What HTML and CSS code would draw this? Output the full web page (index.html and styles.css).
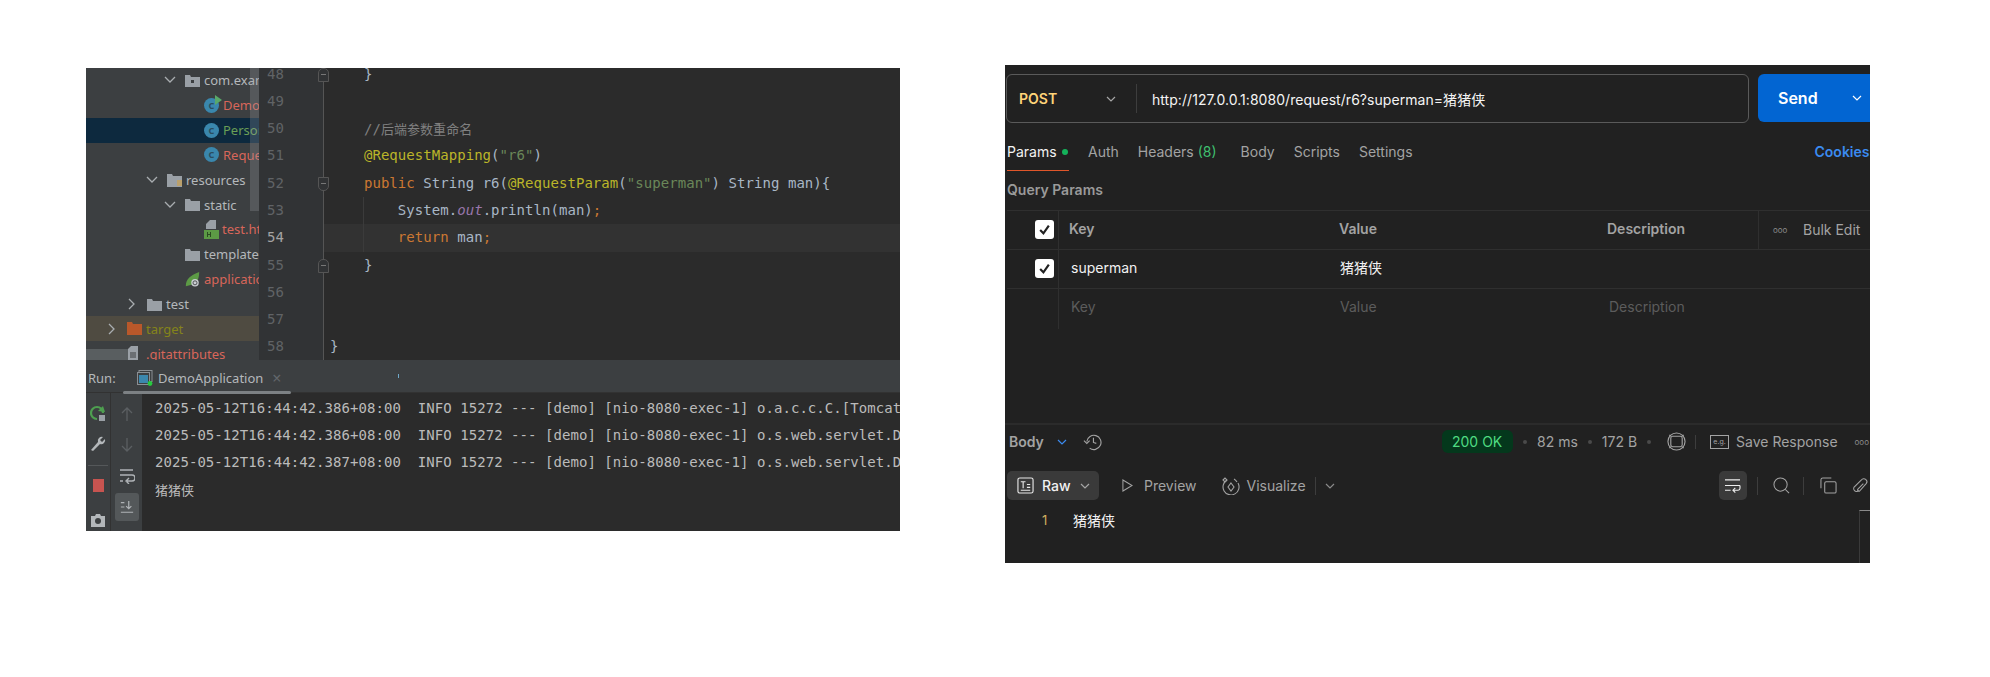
FILE: index.html
```html
<!DOCTYPE html>
<html lang="en">
<head>
    <meta charset="UTF-8">
    <link rel="stylesheet" href="styles.css">
    <title>request param rename</title>
</head>
<body>
<div class="page">

    <!-- IDE screenshot -->
    <div class="ide">
        <div class="ide-top">
            <div class="tree">
                <div class="row lvl4"><svg class="chev" viewBox="0 0 16 16"><path d="M3 5l5 5 5-5"/></svg><svg class="ico" viewBox="0 0 15 15"><path class="fold-fill" d="M0 2h5l1 2h9v10H0z"/><rect x="6" y="7" width="3" height="3" fill="#3c3f41"/></svg><span>com.example.demo</span></div>
                <div class="row lvl5"><span class="cls">C<i class="run-mark"></i></span><span class="red">DemoApplication</span></div>
                <div class="row lvl5 selected"><span class="cls">C</span><span class="green">Person</span></div>
                <div class="row lvl5"><span class="cls">C</span><span class="red">RequestController</span></div>
                <div class="row lvl3"><svg class="chev" viewBox="0 0 16 16"><path d="M3 5l5 5 5-5"/></svg><svg class="ico" viewBox="0 0 15 15"><path class="fold-fill" d="M0 2h5l1 2h9v11H0z"/><path d="M10 9h5M10 11h5M10 13h5" stroke="#d9a032" stroke-width="1.2"/></svg><span>resources</span></div>
                <div class="row lvl4"><svg class="chev" viewBox="0 0 16 16"><path d="M3 5l5 5 5-5"/></svg><svg class="ico" viewBox="0 0 15 15"><path class="fold-fill" d="M0 2h5l1 2h9v10H0z"/></svg><span>static</span></div>
                <div class="row lvl5"><svg class="ico-file" viewBox="0 0 15 19"><path d="M6 0h6v9H2V4z" fill="#9aa0a6"/><rect x="0" y="10" width="15" height="9" fill="#5c9a45"/><path d="M3.5 12v5M6.5 12v5M3.5 14.5h3" stroke="#2c4a22" stroke-width="1"/></svg><span class="red">test.html</span></div>
                <div class="row lvl4"><span class="no-chev"></span><svg class="ico" viewBox="0 0 15 15"><path class="fold-fill" d="M0 2h5l1 2h9v10H0z"/></svg><span>templates</span></div>
                <div class="row lvl4"><span class="no-chev"></span><svg class="ico" viewBox="0 0 16 18"><path d="M0 17C0 8 6 4 16 0c0 9-3 14-8 15z" fill="#5c9a45"/><circle cx="11" cy="13" r="4.5" fill="#c9cdd1"/><circle cx="11" cy="13" r="2.4" fill="none" stroke="#3c3f41"/></svg><span class="red">application.properties</span></div>
                <div class="row lvl2"><svg class="chev" viewBox="0 0 16 16"><path d="M5 3l5 5-5 5"/></svg><svg class="ico" viewBox="0 0 15 15"><path class="fold-fill" d="M0 2h5l1 2h9v10H0z"/></svg><span>test</span></div>
                <div class="row lvl1 ignored"><svg class="chev" viewBox="0 0 16 16"><path d="M5 3l5 5-5 5"/></svg><svg class="ico" viewBox="0 0 15 15"><path d="M0 1h5l1 2h9v11H0z" fill="#b9582a"/></svg><span class="olive">target</span></div>
                <div class="row lvl1"><span class="no-chev"></span><svg class="ico" viewBox="0 0 15 15"><path d="M4 0h7v14H1V3z" fill="#9aa0a6"/><path d="M3 7h6M3 9h6M3 11h6" stroke="#3c3f41"/></svg><span class="red">.gitattributes</span></div>
                <div class="tree-vbar"></div>
                <div class="tree-hbar"></div>
            </div>
            <div class="editor">
                <div class="code">
                    <div class="line"><div class="num">48<i class="fold-mark up"></i></div><div class="src">    <b class="plain">}</b></div></div>
                    <div class="line"><div class="num">49</div><div class="src"></div></div>
                    <div class="line"><div class="num">50</div><div class="src">    <span class="comment">//<span class="cjk">后端参数重命名</span></span></div></div>
                    <div class="line"><div class="num">51</div><div class="src">    <span class="anno">@RequestMapping</span>(<span class="str">"r6"</span>)</div></div>
                    <div class="line"><div class="num">52<i class="fold-mark down"></i></div><div class="src">    <span class="kw">public</span> String r6(<span class="anno">@RequestParam</span>(<span class="str">"superman"</span>) String man){</div></div>
                    <div class="line guide"><div class="num">53</div><div class="src">        System.<span class="static">out</span>.println(man)<span class="kw">;</span></div></div>
                    <div class="line guide current"><div class="num">54</div><div class="src">        <span class="kw">return</span> man<span class="kw">;</span></div></div>
                    <div class="line"><div class="num">55<i class="fold-mark up"></i></div><div class="src">    }</div></div>
                    <div class="line"><div class="num">56</div><div class="src"></div></div>
                    <div class="line"><div class="num">57</div><div class="src"></div></div>
                    <div class="line"><div class="num">58</div><div class="src">}</div></div>
                </div>
            </div>
        </div>

        <div class="runbar">
            <span class="run-label">Run:</span>
            <span class="run-tab">
                <svg class="app-ico" viewBox="0 0 16 16"><rect x="2" y="0.5" width="13" height="11" fill="none" stroke="#8a8f94"/><rect x="0.5" y="2.5" width="12" height="12" fill="#3c3f41" stroke="#8a8f94"/><rect x="2" y="5" width="9" height="8" fill="#3b87ad"/><circle cx="13" cy="13.5" r="2.4" fill="#27c93f"/></svg>
                DemoApplication <em>×</em>
            </span>
            <i class="run-underline"></i>
            <i class="run-tick"></i>
        </div>

        <div class="console">
            <div class="tools">
                <svg class="t-ico" viewBox="0 0 16 16"><path d="M13 8a6 6 0 1 0-6 6" fill="none" stroke="#4e9f50" stroke-width="2.2"/><path d="M8 6l5-5 2 6z" fill="#4e9f50"/><rect x="9" y="10" width="6" height="6" fill="#9aa0a6"/></svg>
                <svg class="t-ico" viewBox="0 0 16 16"><path d="M1 15l7-8a4 4 0 0 1 5-5l-3 3 2 2 3-3a4 4 0 0 1-5 5l-7 7z" fill="#b3b7ba"/></svg>
                <i class="tool-sep"></i>
                <span class="stop"></span>
                <svg class="t-ico cam" viewBox="0 0 16 16"><path d="M1 4h4l1-2h4l1 2h4v11H1z" fill="#b3b7ba"/><circle cx="8" cy="9" r="3" fill="#3c3f41"/></svg>
            </div>
            <div class="tools second">
                <svg class="t2" viewBox="0 0 16 16"><path d="M8 15V2M3 7l5-5 5 5" class="dim"/></svg>
                <svg class="t2" viewBox="0 0 16 16"><path d="M8 1v13M3 9l5 5 5-5" class="dim"/></svg>
                <svg class="t2" viewBox="0 0 16 16"><path d="M1 2h13M1 7h12a2.500 2.500 0 0 1 0 6H8M10 10l-3 3 3 3M1 13h3" class="lit"/></svg>
                <span class="scroll-end"><svg viewBox="0 0 16 16"><path d="M1 3h4M1 8h4M1 14h14M10 1v9M7 7l3 3 3-3" class="lit"/></svg></span>
            </div>
            <div class="log">
                <div>2025-05-12T16:44:42.386+08:00  INFO 15272 --- [demo] [nio-8080-exec-1] o.a.c.c.C.[Tomcat].[localhost].[/]</div>
                <div>2025-05-12T16:44:42.386+08:00  INFO 15272 --- [demo] [nio-8080-exec-1] o.s.web.servlet.DispatcherServlet</div>
                <div>2025-05-12T16:44:42.387+08:00  INFO 15272 --- [demo] [nio-8080-exec-1] o.s.web.servlet.DispatcherServlet</div>
                <div class="cjk">猪猪侠</div>
            </div>
        </div>
    </div>

    <!-- Postman screenshot -->
    <div class="pm">
        <div class="url-row">
            <div class="url-box">
                <span class="method">POST</span>
                <svg class="ch ch-method" viewBox="0 0 10 10"><path d="M1 3l4 4 4-4"/></svg>
                <i class="url-sep"></i>
                <span class="url">http://127.0.0.1:8080/request/r6?superman=猪猪侠</span>
            </div>
            <div class="send">
                <span>Send</span>
                <svg class="ch ch-send" viewBox="0 0 10 10"><path d="M1 3l4 4 4-4"/></svg>
            </div>
        </div>

        <div class="tabs">
            <span class="tab active">Params<i class="dot"></i></span>
            <span class="tab">Auth</span>
            <span class="tab">Headers <b>(8)</b></span>
            <span class="tab wide">Body</span>
            <span class="tab">Scripts</span>
            <span class="tab">Settings</span>
            <span class="cookies">Cookies</span>
        </div>

        <div class="query-title">Query Params</div>

        <div class="params">
            <div class="p-row head">
                <div class="c-check"><span class="box"><svg viewBox="0 0 12 12"><path d="M2 6.500l3 3 5-7"/></svg></span></div>
                <div class="c-key">Key</div>
                <div class="c-val">Value</div>
                <div class="c-desc">Description</div>
                <div class="c-bulk"><span class="ooo">ooo</span>Bulk Edit</div>
            </div>
            <div class="p-row">
                <div class="c-check"><span class="box"><svg viewBox="0 0 12 12"><path d="M2 6.500l3 3 5-7"/></svg></span></div>
                <div class="c-key">superman</div>
                <div class="c-val">猪猪侠</div>
                <div class="c-desc"></div>
                <div></div>
            </div>
            <div class="p-row ghost">
                <div class="c-check"></div>
                <div class="c-key">Key</div>
                <div class="c-val">Value</div>
                <div class="c-desc">Description</div>
                <div></div>
            </div>
        </div>

        <div class="res-line"></div>

        <div class="res-bar">
            <div class="res-left">
                <span class="res-body">Body</span>
                <svg class="ch ch-blue" viewBox="0 0 10 10"><path d="M1 3l4 4 4-4"/></svg>
                <svg class="i-hist" viewBox="0 0 20 20"><path d="M4 10a7.500 7.500 0 1 1 3 7M1 9l3 3 3-3M11 6v5l3 1"/></svg>
            </div>
            <span class="status">200 OK</span>
            <i class="sep-dot"></i><span class="meta">82 ms</span>
            <i class="sep-dot"></i><span class="meta">172 B</span>
            <i class="sep-dot"></i>
            <svg class="i-globe" viewBox="0 0 20 20"><circle cx="10" cy="10" r="9"/><rect x="4" y="4.500" width="12" height="11" rx="2"/><path d="M4 4.500l-1.500-1.500M16 4.500l1.500-1.500M4 15.500l-1.500 1.500M16 15.500l1.500 1.500"/></svg>
            <i class="bar-sep"></i>
            <span class="eg">e.g.</span>
            <span class="meta save">Save Response</span>
            <span class="ooo res-ooo">ooo</span>
        </div>

        <div class="view-bar">
            <div class="raw">
                <svg class="i-raw" viewBox="0 0 18 18"><rect x="1" y="1" width="16" height="16" rx="2"/><path d="M4 5h5M6.500 5v7M10.500 8h3.500M10.500 11h3.500M4 14h10"/></svg>
                <span>Raw</span>
                <svg class="ch ch-raw" viewBox="0 0 10 10"><path d="M1 3l4 4 4-4"/></svg>
            </div>
            <svg class="i-play" viewBox="0 0 12 14"><path d="M1 1l10 6-10 6z"/></svg>
            <span class="view-item preview">Preview</span>
            <svg class="i-vis" viewBox="0 0 18 18"><path d="M5 3a8 8 0 1 0 11 3M12 2a8 8 0 0 1 3 3M9 6l3 4-3 4-3-4z"/><path d="M1 3l2-2 2 2-2 2z"/></svg>
            <span class="view-item visualize">Visualize</span>
            <i class="bar-sep tall vis-sep"></i>
            <svg class="ch ch-vis" viewBox="0 0 10 10"><path d="M1 3l4 4 4-4"/></svg>
            <span class="wrap-btn"><svg viewBox="0 0 18 16"><path d="M1 2h16M1 8h16M1 13h6M17 8v3a2 2 0 0 1-2 2h-5M12 10.500l-2.500 2.500 2.500 2.500"/></svg></span>
            <i class="bar-sep tall"></i>
            <svg class="i-search" viewBox="0 0 18 18"><circle cx="8" cy="8" r="7"/><path d="M13 13l4 4"/></svg>
            <i class="bar-sep tall"></i>
            <svg class="i-copy" viewBox="0 0 18 18"><rect x="5" y="5" width="12" height="12" rx="1.500"/><path d="M1 12V3a2 2 0 0 1 2-2h9"/></svg>
            <svg class="i-link" viewBox="0 0 18 18"><path d="M7 14l-1 1a3 3 0 0 1-4-4l8-8a3 3 0 0 1 5 4l-7 8a1.500 1.500 0 0 1-2-2l6-6"/></svg>
        </div>

        <div class="out-row">
            <span class="ln">1</span>
            <span class="out-text">猪猪侠</span>
        </div>
        <div class="mini-map"></div>
    </div>
</div>
</body>
</html>
```

FILE: styles.css
```css
* {
    margin: 0;
    padding: 0;
    box-sizing: border-box;
}
body {
    background: #fff;
    font-family: "Inter", "Noto Sans CJK SC", sans-serif;
    height: 677px;
    overflow: hidden;
}
i, em {
    font-style: normal;
}
.page {
    display: flex;
    align-items: flex-start;
    padding-left: 86px;
}

/* ---- IDE ---- */
.ide {
    width: 814px;
    height: 463px;
    margin-top: 68px;
    background: #2b2b2b;
    overflow: hidden;
    flex: none;
    font-family: "DejaVu Sans Mono", "Noto Sans CJK SC", monospace;
}
.ide-top {
    display: flex;
    height: 292px;
}
.tree {
    position: relative;
    width: 173px;
    height: 292px;
    background: #3c3f41;
    overflow: hidden;
    flex: none;
    font-family: "Noto Sans", "Noto Sans CJK SC", sans-serif;
    font-size: 13px;
    color: #b4b8bb;
}
.row {
    display: flex;
    align-items: center;
    height: 24.850px;
    white-space: nowrap;
}
.lvl1 { padding-left: 18px; }
.lvl2 { padding-left: 38px; }
.lvl3 { padding-left: 58px; }
.lvl4 { padding-left: 76px; }
.lvl5 { padding-left: 118px; }
.selected { background: #0d293e; }
.ignored { background: #4f4b41; }
.chev {
    width: 16px;
    height: 16px;
    margin-right: 7px;
    flex: none;
}
.chev path {
    fill: none;
    stroke: #a9adb0;
    stroke-width: 1.300;
}
.no-chev {
    width: 23px;
    flex: none;
}
.ico {
    width: 15px;
    height: 15px;
    margin-right: 4px;
    flex: none;
}
.ico-file {
    width: 15px;
    height: 19px;
    margin-right: 3px;
    flex: none;
}
.fold-fill { fill: #9aa0a6; }
.cls {
    position: relative;
    width: 15px;
    height: 15px;
    margin-right: 4px;
    border-radius: 50%;
    background: #3a87ad;
    color: #2a4d60;
    font-size: 9px;
    font-weight: 700;
    line-height: 15px;
    text-align: center;
    flex: none;
}
.run-mark {
    position: absolute;
    top: -3px;
    right: -3px;
    border-left: 7px solid #59a869;
    border-top: 5px solid transparent;
    border-bottom: 5px solid transparent;
}
.red { color: #d8665a; }
.green { color: #6a9f56; }
.olive { color: #85841a; }
.tree-vbar {
    position: absolute;
    left: 164px;
    top: 0;
    width: 9px;
    height: 143px;
    background: rgba(160, 165, 170, 0.25);
}
.tree-hbar {
    position: absolute;
    left: 0;
    top: 281px;
    width: 44px;
    height: 11px;
    background: rgba(160, 165, 170, 0.3);
}

.editor {
    flex: 1;
    overflow: hidden;
    background: #2b2b2b;
}
.code {
    margin-top: -7.500px;
    font-size: 14px;
    letter-spacing: 0.050px;
    color: #a9b7c6;
}
.line {
    position: relative;
    display: flex;
    height: 27.300px;
    line-height: 27.300px;
}
.num {
    position: relative;
    width: 65px;
    padding-left: 8px;
    background: #313335;
    border-right: 1px solid #555;
    color: #606366;
    flex: none;
}
.src {
    flex: 1;
    padding-left: 6px;
    white-space: pre;
}
.src b { font-weight: 400; }
.current .src { background: #323232; }
.current .num { color: #a4a3a3; }
.guide::before {
    content: "";
    position: absolute;
    left: 104px;
    top: 0;
    bottom: 0;
    width: 1px;
    background: #3b3b3b;
}
.comment { color: #808080; }
.anno { color: #bbb529; }
.kw { color: #cc7832; }
.str { color: #6a8759; }
.static { color: #9876aa; font-style: italic; }
.cjk { font-family: "Noto Sans CJK SC", sans-serif; font-size: 13px; }
.fold-mark {
    position: absolute;
    right: -6px;
    top: 7px;
    width: 11px;
    height: 14px;
    background: #313335;
    border: 1px solid #555;
}
.fold-mark::after {
    content: "";
    position: absolute;
    left: 2px;
    top: 5px;
    width: 5px;
    height: 1px;
    background: #777;
}
.fold-mark.up { border-radius: 5px 5px 0 0; }
.fold-mark.down { border-radius: 0 0 5px 5px; }

.runbar {
    position: relative;
    display: flex;
    align-items: center;
    height: 33px;
    padding-top: 3px;
    background: #3c3f41;
    border-bottom: 1px solid #323232;
    font-family: "Noto Sans", sans-serif;
    font-size: 13px;
    color: #b4b8bb;
}
.run-label { margin-left: 2px; width: 49px; }
.run-tab {
    display: flex;
    align-items: center;
    gap: 5px;
}
.run-tab em { color: #62666a; margin-left: 4px; font-size: 16px; }
.app-ico { width: 16px; height: 16px; }
.run-underline {
    position: absolute;
    left: 37px;
    bottom: -2px;
    width: 168px;
    height: 3px;
    border-radius: 2px;
    background: #7d8184;
}
.run-tick {
    position: absolute;
    left: 312px;
    top: 14px;
    width: 1px;
    height: 4px;
    background: #6fa8c9;
}

.console {
    display: flex;
    height: 138px;
}
.tools {
    display: flex;
    flex-direction: column;
    align-items: center;
    width: 25px;
    padding-top: 12px;
    background: #3c3f41;
    border-right: 1px solid #323232;
    flex: none;
}
.tools.second {
    width: 31px;
    padding-top: 13px;
    gap: 15px;
    border-right: 0;
}
.t-ico { width: 16px; height: 16px; margin-bottom: 14px; flex: none; }
.tool-sep { width: 20px; height: 1px; background: #55585a; margin-bottom: 13px; }
.stop { width: 11px; height: 13px; background: #c75450; margin-bottom: 20px; flex: none; }
.cam { margin-bottom: 0; }
.t2 { width: 16px; height: 16px; fill: none; flex: none; }
.dim { stroke: #5b5f62; stroke-width: 1.300; fill: none; }
.lit { stroke: #afb3b6; stroke-width: 1.400; fill: none; }
.scroll-end {
    display: flex;
    align-items: center;
    justify-content: center;
    width: 24px;
    height: 28px;
    margin-top: -6px;
    border-radius: 3px;
    background: #54585a;
    flex: none;
}
.scroll-end svg { width: 14px; height: 14px; }
.log {
    flex: 1;
    padding: 2px 0 0 13px;
    background: #2b2b2b;
    font-size: 14px;
    letter-spacing: 0.050px;
    line-height: 27px;
    color: #bbb;
    overflow: hidden;
}
.log div { white-space: pre; }

/* ---- Postman ---- */
.pm {
    position: relative;
    width: 865px;
    height: 498px;
    margin: 65px 0 0 105px;
    background: #212121;
    overflow: hidden;
    flex: none;
    color: #fff;
    font-size: 14px;
}
.ch {
    fill: none;
    stroke: #a6a6a6;
    stroke-width: 1.200;
    flex: none;
}
.url-row {
    display: flex;
    width: 900px;
    padding: 9px 0 0 1px;
}
.url-box {
    display: flex;
    align-items: center;
    width: 743px;
    height: 49px;
    padding-left: 12px;
    border: 1px solid #5a5a5a;
    border-radius: 6px;
    flex: none;
}
.method {
    width: 80px;
    font-weight: 600;
    color: #ffd479;
}
.ch-method { width: 10px; height: 10px; margin-left: 7px; }
.url-sep {
    width: 1px;
    height: 29px;
    margin: 0 15px 0 20px;
    background: #3d3d3d;
}
.url { color: #f4f4f4; white-space: nowrap; letter-spacing: 0.050px; }
.send {
    display: flex;
    align-items: center;
    width: 150px;
    height: 48px;
    margin-left: 9px;
    padding-left: 20px;
    border-radius: 6px;
    background: #0265d2;
    font-size: 16px;
    font-weight: 600;
    flex: none;
}
.ch-send { width: 10px; height: 10px; margin-left: 34px; stroke: #fff; }

.tabs {
    display: flex;
    gap: 19px;
    width: 900px;
    height: 38px;
    margin: 10px 0 0 2px;
    color: #a3a3a3;
}
.tab {
    display: flex;
    align-items: center;
    height: 38px;
    border-bottom: 1px solid transparent;
    white-space: pre;
}
.tab b { font-weight: 400; color: #3fbf6f; }
.tab.active {
    width: 62px;
    border-bottom-color: #e0562a;
    color: #f2f2f2;
}
.tab.wide { margin-left: 5px; }
.dot {
    width: 6px;
    height: 6px;
    margin-left: 5px;
    border-radius: 50%;
    background: #14b25a;
}
.cookies {
    align-self: center;
    margin: -1px 0 0 383px;
    font-weight: 600;
    color: #3b8bf0;
}
.query-title {
    height: 39px;
    margin-left: 2px;
    font-weight: 600;
    line-height: 38px;
    color: #9a9a9a;
}
.params {
    margin-left: 2px;
    border-top: 1px solid #2f2f2f;
}
.p-row {
    display: grid;
    grid-template-columns: 52px 280px 268px 151px 112px;
    align-items: stretch;
    height: 39px;
    line-height: 36px;
    border-bottom: 1px solid #2f2f2f;
    color: #f2f2f2;
}
.p-row.head { color: #a3a3a3; font-weight: 600; }
.p-row.ghost { border-bottom: 0; color: #5c5c5c; height: 40px; }
.c-check {
    display: flex;
    align-items: center;
    justify-content: flex-end;
    padding-right: 4px;
    border-right: 1px solid #2f2f2f;
}
.box {
    display: flex;
    align-items: center;
    justify-content: center;
    width: 19px;
    height: 19px;
    margin-top: -1px;
    border-radius: 3px;
    background: #fff;
}
.box svg {
    width: 13px;
    height: 13px;
    fill: none;
    stroke: #212121;
    stroke-width: 2;
}
.c-key { padding-left: 12px; }
.head .c-key { padding-left: 10px; }
.c-val { padding-left: 1px; }
.head .c-val { padding-left: 0; }
.c-desc { padding-left: 2px; }
.head .c-desc { padding-left: 0; }
.c-bulk {
    display: flex;
    align-items: center;
    border-left: 1px solid #2f2f2f;
    padding-left: 14px;
    font-weight: 400;
    white-space: nowrap;
}
.ooo {
    width: 30px;
    font-size: 8px;
    color: #8a8a8a;
}
.res-line {
    height: 2px;
    margin-top: 94px;
    background: #2b2b2b;
}
.res-bar {
    display: flex;
    align-items: center;
    height: 33px;
    color: #a3a3a3;
    white-space: nowrap;
}
.res-left {
    display: flex;
    align-items: center;
    width: 437px;
    padding-left: 4px;
    flex: none;
}
.res-body { width: 48px; font-weight: 600; }
.ch-blue { width: 10px; height: 10px; stroke: #3b8bf0; }
.i-hist {
    width: 19px;
    height: 19px;
    margin-left: 16px;
    fill: none;
    stroke: #a3a3a3;
    stroke-width: 1.200;
}
.status {
    width: 71px;
    height: 23px;
    padding-left: 10px;
    border-radius: 6px;
    background: #04381c;
    color: #4fdc82;
    line-height: 23px;
    flex: none;
}
.sep-dot {
    width: 4px;
    height: 4px;
    margin: 0 10px;
    border-radius: 50%;
    background: #4a4a4a;
    flex: none;
}
.meta { color: #a3a3a3; }
.i-globe {
    width: 19px;
    height: 19px;
    margin-left: 6px;
    fill: none;
    stroke: #a3a3a3;
    stroke-width: 1.200;
    flex: none;
}
.bar-sep {
    width: 1px;
    height: 14px;
    margin: 0 14px 0 9px;
    background: #3d3d3d;
    flex: none;
}
.eg {
    width: 19px;
    height: 14px;
    margin-right: 7px;
    border: 1px solid #a3a3a3;
    font-size: 7px;
    line-height: 11px;
    text-align: center;
    color: #a3a3a3;
    flex: none;
}
.res-ooo { margin-left: 17px; }

.view-bar {
    display: flex;
    align-items: center;
    height: 29px;
    margin-top: 13px;
    white-space: nowrap;
    color: #a3a3a3;
}
.raw {
    display: flex;
    align-items: center;
    width: 92px;
    height: 29px;
    margin-left: 2px;
    padding-left: 10px;
    border-radius: 5px;
    background: #3a3a3a;
    color: #f2f2f2;
    font-weight: 500;
    flex: none;
}
.i-raw {
    width: 17px;
    height: 17px;
    margin-right: 8px;
    fill: none;
    stroke: #e8e8e8;
    stroke-width: 1.200;
}
.ch-raw { width: 10px; height: 10px; margin-left: 9px; }
.i-play {
    width: 11px;
    height: 13px;
    margin: 0 11px 0 23px;
    fill: none;
    stroke: #a3a3a3;
    stroke-width: 1.100;
    flex: none;
}
.i-vis {
    width: 18px;
    height: 18px;
    margin: 0 7px 0 25px;
    fill: none;
    stroke: #a3a3a3;
    stroke-width: 1.100;
    flex: none;
}
.bar-sep.tall { height: 18px; }
.bar-sep.vis-sep { margin-right: 9px; }
.ch-vis { width: 10px; height: 10px; stroke: #8a8a8a; }
.wrap-btn {
    display: flex;
    align-items: center;
    justify-content: center;
    width: 28px;
    height: 29px;
    margin: 0 1px 0 384px;
    border-radius: 5px;
    background: #3a3a3a;
    flex: none;
}
.wrap-btn svg {
    width: 17px;
    height: 15px;
    fill: none;
    stroke: #eee;
    stroke-width: 1.200;
}
.i-search, .i-copy, .i-link {
    width: 17px;
    height: 17px;
    fill: none;
    stroke: #a3a3a3;
    stroke-width: 1.100;
    flex: none;
}
.i-search { margin: 0 4px 0 1px; }
.i-copy { margin-left: 2px; }
.i-link { margin-left: 15px; }
.out-row {
    display: flex;
    align-items: center;
    height: 40px;
}
.ln {
    width: 68px;
    padding-left: 37px;
    color: #d0b060;
    font-size: 13px;
}
.out-text { color: #f2f2f2; }
.mini-map {
    position: absolute;
    left: 854px;
    top: 445px;
    width: 30px;
    height: 60px;
    border-left: 1px solid #3a3a3a;
    border-top: 1px solid #8a8a8a;
}
```
